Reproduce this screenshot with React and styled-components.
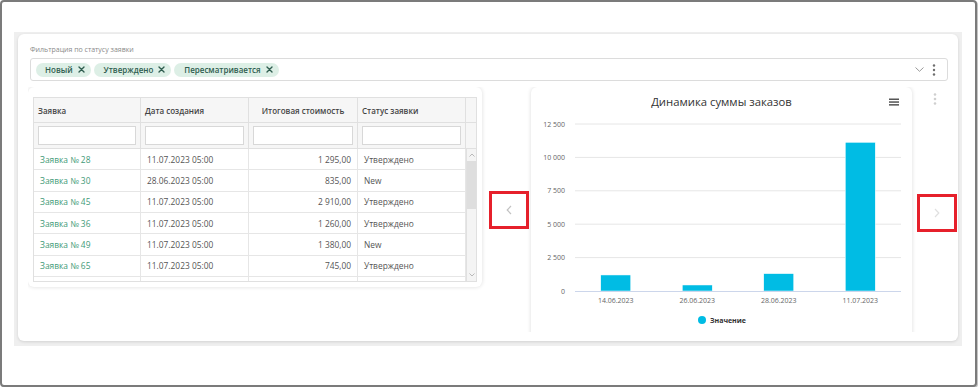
import React from 'react';
import styled, { createGlobalStyle } from 'styled-components';

const Global = createGlobalStyle`
  html, body { margin: 0; padding: 0; background: #fff; }
  body { font-family: "Open Sans", "Noto Sans", sans-serif; }
  * { box-sizing: border-box; }
`;

const Frame = styled.div`
  width: 977px;
  height: 387px;
  border: 2px solid #7b7b7b;
  border-radius: 4px;
  box-shadow: 1px 1px 0 #c4c4c4;
  padding: 30px 0 0 12px;
  background: #fff;
`;

const Panel = styled.div`
  width: 948px;
  height: 314px;
  background: #efefef;
  padding: 2px 4px 5px 4px;
`;

const Card = styled.div`
  height: 100%;
  background: #fff;
  border-radius: 6px;
  box-shadow: 0 1px 3px rgba(0, 0, 0, 0.12);
  padding: 11px 10px 9px 12px;
  display: flex;
  flex-direction: column;
`;

const FilterLabel = styled.div`
  font-size: 7px;
  line-height: 9px;
  color: #8a8a8a;
  margin-bottom: 4px;
`;

const Select = styled.div`
  height: 23px;
  border: 1px solid #dcdcdc;
  border-radius: 3px;
  display: flex;
  align-items: center;
  padding: 0 11px 0 5px;
`;

const Chips = styled.div`
  display: flex;
  gap: 3px;
`;

const Chip = styled.div`
  height: 14px;
  border-radius: 7px;
  background: #ddefe6;
  color: #2f5d4f;
  font-size: 8px;
  font-weight: 600;
  display: flex;
  align-items: center;
  gap: 5px;
  padding: 0 6px 0 ${p => p.$pl || 9}px;
`;

const SelectTools = styled.div`
  margin-left: auto;
  display: flex;
  align-items: center;
  gap: 8px;
`;

const ContentRow = styled.div`
  margin: 6px -10px 0 -2px;
  height: 245px;
  display: flex;
  align-items: flex-start;
  overflow: hidden;
`;

const TableCard = styled.div`
  width: 454px;
  height: 200px;
  flex: none;
  background: #fff;
  border-radius: 6px;
  box-shadow: 0 0 4px rgba(0, 0, 0, 0.14);
  padding: 10px 5px 5px 5px;
`;

const Table = styled.div`
  width: 444px;
  height: 185px;
  border: 1px solid #e0e0e0;
  display: flex;
  flex-direction: column;
  overflow: hidden;
`;

const HeadRow = styled.div`
  display: grid;
  grid-template-columns: 107px 108px 109px 108px 10px;
  height: ${p => p.$h}px;
  background: #f6f6f6;
  border-bottom: 1px solid #e0e0e0;
  flex: none;
`;

const HeadCell = styled.div`
  border-right: 1px solid #e0e0e0;
  display: flex;
  align-items: center;
  justify-content: ${p => (p.$center ? 'center' : 'flex-start')};
  padding: 0 4px;
  font-size: 8px;
  font-weight: 600;
  color: #444;
  &:last-child { border-right: none; }
`;

const FilterCell = styled.div`
  border-right: 1px solid #e0e0e0;
  padding: 3px 4px;
  &:last-child { border-right: none; }
`;

const FilterInput = styled.div`
  height: 100%;
  background: #fff;
  border: 1px solid #d8d8d8;
`;

const Body = styled.div`
  flex: 1;
  display: flex;
  min-height: 0;
`;

const Rows = styled.div`
  flex: 1;
  overflow: hidden;
`;

const Row = styled.div`
  display: grid;
  grid-template-columns: 107px 108px 109px 108px;
  height: 21.33px;
  border-bottom: 1px solid #e6e6e6;
`;

const Cell = styled.div`
  border-right: 1px solid #e6e6e6;
  display: flex;
  align-items: center;
  justify-content: ${p => (p.$right ? 'flex-end' : 'flex-start')};
  padding: ${p => (p.$right ? '0 6px 0 4px' : '0 6px')};
  font-size: 8.4px;
  color: ${p => p.$color || '#555'};
  white-space: nowrap;
`;

const Scrollbar = styled.div`
  width: 10px;
  flex: none;
  background: #f4f4f4;
  border-left: 1px solid #e0e0e0;
  display: flex;
  flex-direction: column;
  align-items: center;
`;

const ScrollArrow = styled.div`
  height: 12px;
  display: flex;
  align-items: center;
  justify-content: center;
  margin-top: ${p => (p.$bottom ? 'auto' : '0')};
`;

const Thumb = styled.div`
  width: 9px;
  height: 48px;
  background: #dedede;
`;

const ArrowCol = styled.div`
  width: ${p => p.$w}px;
  flex: none;
  height: 100%;
  display: flex;
  flex-direction: column;
  justify-content: ${p => (p.$top ? 'flex-start' : 'center')};
  padding-left: ${p => p.$pl}px;
`;

const NavBox = styled.div`
  width: 40px;
  height: 38px;
  border: 3px solid #e6202b;
  display: flex;
  align-items: center;
  justify-content: center;
  margin-top: ${p => p.$mt || 0}px;
`;

const Kebab = styled.div`
  margin: 6px 0 0 16px;
  width: 4px;
`;

const ChartCard = styled.div`
  width: 381px;
  height: 262px;
  flex: none;
  background: #fff;
  border-radius: 6px;
  box-shadow: 0 0 4px rgba(0, 0, 0, 0.14);
  padding-top: 8px;
`;

const ChartHead = styled.div`
  display: grid;
  grid-template-columns: 1fr auto 1fr;
  align-items: center;
  height: 14px;
`;

const ChartTitle = styled.div`
  font-size: 11.3px;
  line-height: 14px;
  color: #333;
  white-space: nowrap;
`;

const MenuBtn = styled.div`
  justify-self: end;
  margin-right: 13px;
  display: flex;
`;

const XIcon = () => (
  <svg width="7" height="7" viewBox="0 0 7 7">
    <path d="M1 1 L6 6 M6 1 L1 6" stroke="#2f5d4f" strokeWidth="1.4" strokeLinecap="round" />
  </svg>
);

const rows = [
  ['Заявка № 28', '11.07.2023 05:00', '1 295,00', 'Утверждено'],
  ['Заявка № 30', '28.06.2023 05:00', '835,00', 'New'],
  ['Заявка № 45', '11.07.2023 05:00', '2 910,00', 'Утверждено'],
  ['Заявка № 36', '11.07.2023 05:00', '1 260,00', 'Утверждено'],
  ['Заявка № 49', '11.07.2023 05:00', '1 380,00', 'New'],
  ['Заявка № 65', '11.07.2023 05:00', '745,00', 'Утверждено'],
  ['', '', '', ''],
];

const yTicks = [
  ['12 500', 15],
  ['10 000', 48.4],
  ['7 500', 81.8],
  ['5 000', 115.2],
  ['2 500', 148.6],
];

const bars = [
  { label: '14.06.2023', value: 1200 },
  { label: '26.06.2023', value: 450 },
  { label: '28.06.2023', value: 1300 },
  { label: '11.07.2023', value: 11130 },
];

const Chart = () => {
  const base = 182;
  const scale = 167 / 12500;
  const left = 44;
  const step = 81.5;
  return (
    <svg width="381" height="240" viewBox="0 0 381 240" style={{ display: 'block' }}>
      {yTicks.map(([t, y]) => (
        <g key={t}>
          <line x1={left} x2={370} y1={y} y2={y} stroke="#e6e6e6" strokeWidth="1" />
          <text x={34} y={y + 2.5} fontSize="7" fill="#666" textAnchor="end" fontFamily="Open Sans, sans-serif">{t}</text>
        </g>
      ))}
      <text x={34} y={base + 2.5} fontSize="7" fill="#666" textAnchor="end" fontFamily="Open Sans, sans-serif">0</text>
      {bars.map((b, i) => {
        const cx = left + step * i + step / 2;
        const h = b.value * scale;
        return (
          <g key={b.label}>
            <rect x={cx - 15} y={base - h} width={30} height={h} fill="#00bce4" stroke="#fff" strokeWidth="0.5" />
            <text x={cx} y={base + 12} fontSize="7" fill="#666" textAnchor="middle" fontFamily="Open Sans, sans-serif">{b.label}</text>
          </g>
        );
      })}
      <line x1={left} x2={370} y1={base + 0.5} y2={base + 0.5} stroke="#ccd6eb" strokeWidth="1" />
      <circle cx={171} cy={211} r={4} fill="#00bce4" />
      <text x={179} y={213.5} fontSize="7" fontWeight="700" fill="#333" fontFamily="Open Sans, sans-serif">Значение</text>
    </svg>
  );
};

export default function App() {
  return (
    <>
      <Global />
      <Frame>
        <Panel>
          <Card>
            <FilterLabel>Фильтрация по статусу заявки</FilterLabel>
            <Select>
              <Chips>
                <Chip>Новый <XIcon /></Chip>
                <Chip $pl={10}>Утверждено <XIcon /></Chip>
                <Chip $pl={10}>Пересматривается <XIcon /></Chip>
              </Chips>
              <SelectTools>
                <svg width="9" height="5" viewBox="0 0 9 5">
                  <path d="M0.5 0.5 L4.5 4.3 L8.5 0.5" fill="none" stroke="#9a9a9a" strokeWidth="1" />
                </svg>
                <svg width="4" height="12" viewBox="0 0 4 12">
                  <circle cx="2" cy="1.5" r="1.2" fill="#6d6d6d" />
                  <circle cx="2" cy="6" r="1.2" fill="#6d6d6d" />
                  <circle cx="2" cy="10.5" r="1.2" fill="#6d6d6d" />
                </svg>
              </SelectTools>
            </Select>
            <ContentRow>
              <TableCard>
                <Table>
                  <HeadRow $h={25}>
                    <HeadCell>Заявка</HeadCell>
                    <HeadCell>Дата создания</HeadCell>
                    <HeadCell $center>Итоговая стоимость</HeadCell>
                    <HeadCell>Статус заявки</HeadCell>
                    <HeadCell />
                  </HeadRow>
                  <HeadRow $h={26}>
                    <FilterCell><FilterInput /></FilterCell>
                    <FilterCell><FilterInput /></FilterCell>
                    <FilterCell><FilterInput /></FilterCell>
                    <FilterCell><FilterInput /></FilterCell>
                    <FilterCell />
                  </HeadRow>
                  <Body>
                    <Rows>
                      {rows.map((r, i) => (
                        <Row key={i}>
                          <Cell $color="#3f9a78">{r[0]}</Cell>
                          <Cell>{r[1]}</Cell>
                          <Cell $right>{r[2]}</Cell>
                          <Cell>{r[3]}</Cell>
                        </Row>
                      ))}
                    </Rows>
                    <Scrollbar>
                      <ScrollArrow>
                        <svg width="6" height="4" viewBox="0 0 6 4">
                          <path d="M0.5 3.5 L3 1 L5.5 3.5" fill="none" stroke="#aaa" strokeWidth="0.8" />
                        </svg>
                      </ScrollArrow>
                      <Thumb />
                      <ScrollArrow $bottom>
                        <svg width="6" height="4" viewBox="0 0 6 4">
                          <path d="M0.5 0.5 L3 3 L5.5 0.5" fill="none" stroke="#aaa" strokeWidth="0.8" />
                        </svg>
                      </ScrollArrow>
                    </Scrollbar>
                  </Body>
                </Table>
              </TableCard>
              <ArrowCol $w={49} $pl={7}>
                <NavBox>
                  <svg width="6" height="10" viewBox="0 0 6 10">
                    <path d="M5 1 L1.2 5 L5 9" fill="none" stroke="#c2c2c2" strokeWidth="1.2" />
                  </svg>
                </NavBox>
              </ArrowCol>
              <ChartCard>
                <ChartHead>
                  <span />
                  <ChartTitle>Динамика суммы заказов</ChartTitle>
                  <MenuBtn>
                    <svg width="10" height="8" viewBox="0 0 10 8">
                      <rect x="0" y="0.5" width="10" height="1.5" fill="#555" />
                      <rect x="0" y="3.3" width="10" height="1.5" fill="#555" />
                      <rect x="0" y="6.1" width="10" height="1.5" fill="#555" />
                    </svg>
                  </MenuBtn>
                </ChartHead>
                <Chart />
              </ChartCard>
              <ArrowCol $w={56} $pl={5} $top>
                <Kebab>
                  <svg width="4" height="12" viewBox="0 0 4 12" style={{ display: 'block' }}>
                    <circle cx="2" cy="1.5" r="1.3" fill="#cfcfcf" />
                    <circle cx="2" cy="6" r="1.3" fill="#cfcfcf" />
                    <circle cx="2" cy="10.5" r="1.3" fill="#cfcfcf" />
                  </svg>
                </Kebab>
                <NavBox $mt={89}>
                  <svg width="6" height="10" viewBox="0 0 6 10">
                    <path d="M1 1 L4.8 5 L1 9" fill="none" stroke="#e0e0e0" strokeWidth="1.2" />
                  </svg>
                </NavBox>
              </ArrowCol>
            </ContentRow>
          </Card>
        </Panel>
      </Frame>
    </>
  );
}
